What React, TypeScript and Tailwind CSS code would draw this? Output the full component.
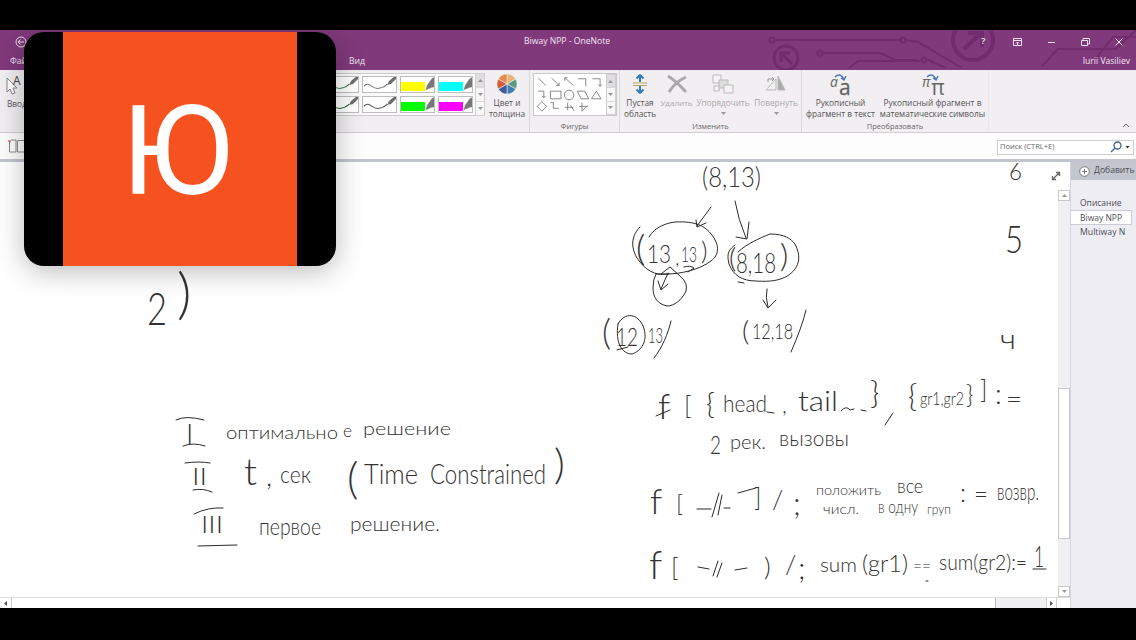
import React from "react";

type TextProps = { x: number; y: number; s: number; w?: number; children: string };

/* A handwritten note on the page: baseline at x/y, stretched to a width */
function Note({ x, y, s, w, children }: TextProps) {
  return (
    <text x={x} y={y} fontSize={s} textLength={w || undefined} lengthAdjust="spacingAndGlyphs">
      {children}
    </text>
  );
}

/* x, baseline, size, width (0 keeps the natural width), text */
const notes: [number, number, number, number, string][] = [
  [702, 187, 28, 59, "(8,13)"],
  [1009, 180, 24, 13, "6"], [1005, 253, 37, 18, "5"], [1000, 349, 27, 16, "ч"],
  [636, 261, 36, 0, "("], [647, 263, 26, 24, "13"], [675, 265, 20, 0, ","], [681, 262, 21, 16, "13"], [701, 260, 25, 0, ")"],
  [729, 268, 28, 0, "("], [736, 273, 28, 40, "8,18"], [780, 267, 32, 0, ")"],
  [602, 345, 35, 0, "("], [616, 346, 26, 22, "12"], [648, 343, 22, 15, "13"],
  [742, 341, 28, 0, "("], [752, 339, 22, 41, "12,18"],
  [658, 419, 36, 0, "f"], [684, 415, 25, 0, "["], [706, 414, 30, 0, "{"], [723, 412, 24, 44, "head"], [782, 413, 22, 0, ","],
  [798, 411, 27, 40, "tail"], [870, 404, 32, 0, "}"], [908, 407, 31, 0, "{"], [920, 405, 18, 44, "gr1,gr2"],
  [966, 404, 25, 0, "}"], [980, 399, 25, 0, "]"], [995, 404, 28, 0, ":"], [1006, 409, 27, 16, "="],
  [710, 454, 26, 11, "2"], [730, 449, 19, 36, "рек."], [779, 446, 22, 70, "вызовы"],
  [650, 514, 36, 0, "f"], [676, 512, 24, 0, "["], [754, 507, 25, 0, "]"], [772, 509, 26, 0, "/"], [793, 515, 31, 0, ";"],
  [816, 495, 14, 65, "положить"], [897, 493, 20, 26, "все"], [960, 502, 25, 0, ":"], [974, 503, 23, 14, "="], [997, 500, 24, 42, "возвр."],
  [823, 514, 14, 36, "числ."], [878, 513, 17, 40, "в одну"], [927, 514, 14, 24, "груп"],
  [649, 579, 39, 0, "f"], [671, 577, 25, 0, "["], [764, 576, 26, 0, ")"], [785, 574, 26, 0, "/"], [798, 579, 30, 0, ";"],
  [820, 572, 20, 37, "sum"], [862, 572, 23, 46, "(gr1)"], [913, 573, 20, 18, "=="],
  [939, 570, 21, 88, "sum(gr2):="], [1034, 567, 30, 10, "1"],
  [147, 325, 46, 20, "2"], [177, 313, 56, 0, ")"],
  [186, 444, 28, 0, "I"], [192, 485, 23, 15, "II"], [201, 533, 23, 22, "III"],
  [226, 439, 17, 112, "оптимально"], [343, 437, 18, 9, "е"], [363, 435, 18, 88, "решение"],
  [244, 485, 38, 0, "t"], [266, 486, 28, 0, ","], [280, 483, 23, 31, "сек"], [347, 494, 44, 0, "("],
  [364, 484, 28, 54, "Time"], [430, 484, 28, 116, "Constrained"], [554, 479, 42, 0, ")"],
  [259, 535, 23, 62, "первое"], [350, 531, 19, 90, "решение."],
];

const strokes: string[] = [
  "M711 207L697 226M696 220L697 227L706 223",
  "M735 201Q738 219 746 238M736 237L747 239L749 222",
  "M649 237C655 226 668 223 675 222C696 221 705 226 712 235C720 246 719 255 711 261C699 270 680 274 667 274C655 276 645 270 637 258C630 246 632 235 640 227",
  "M684 267Q690 265 694 268L688 272",
  "M656 274L669 274M661 274L670 267L681 277Q688 283 686 291C682 300 674 306 667 306C658 304 653 298 653 288Q653 279 656 274",
  "M668 273L661 289M658 281L661 290L668 284",
  "M738 252C748 243 758 239 770 234C785 234 791 239 795 244C801 256 799 263 795 269C786 281 770 282 756 281C742 281 733 275 729 264C726 252 730 249 735 245M738 282L744 283",
  "M767 289Q765 297 768 307M763 300L768 308L776 300",
  "M671 321C668 334 662 348 654 358",
  "M806 310Q802 327 791 352",
  "M618 324C625 311 638 314 643 326C649 341 641 351 632 354C622 354 615 343 618 324",
  "M617 350L628 347",
  "M656 416L670 410M767 412L774 413M841 411Q846 405 850 410L854 409M861 410L866 411",
  "M893 413L885 425",
  "M697 509L711 509M719 493L712 517M722 495L718 515M724 508L730 508M738 493L756 488",
  "M698 567L709 569M718 561L713 576M722 563L717 577M735 570L747 568",
  "M1033 569L1046 569M926 581L928 581",
  "M176 420Q186 415 204 420M183 446Q193 442 205 446",
  "M185 463Q199 461 210 463M193 490Q203 488 212 492",
  "M194 514Q208 507 223 508M198 546L237 545",
];

const label = "whitespace-pre text-center text-[8.3px] leading-[11px] text-[#555]";

function Pen({ color, marker }: { color: string; marker?: boolean }) {
  return (
    <svg className="h-[17px] w-[35px] border border-[#bdbdbd] bg-white" viewBox="1 1 33 15">
      {marker ? (
        <>
          <path d="M1 6H25V15H1z" fill={color} />
          <path d="M25 15L27 9L32 2L35 1V11L31 12L24 15z" fill="#777" stroke="#eee" strokeWidth=".5" />
        </>
      ) : (
        <>
          <path d="M2 10C8 4 10 15 18 12Q23 11 25 8" fill="none" stroke={color} strokeWidth="1.1" />
          <path d="M25 9L27 5L33 0L35 2L29 8z" fill="#6e6e6e" />
        </>
      )}
    </svg>
  );
}

function Arrow({ up }: { up?: boolean }) {
  return (
    <svg className="h-[3px] w-[5px]" viewBox="0 0 5 3" fill="#999">
      <path d={up ? "M0 3L2.5 0L5 3z" : "M0 0H5L2.5 3z"} />
    </svg>
  );
}

function Spin() {
  return (
    <div className="flex w-[10px] flex-col border border-[#d0d0d0] bg-[#f7f7f7]">
      <span className="flex flex-1 items-center justify-center bg-[#dedee0]"><Arrow up /></span>
      <span className="flex flex-1 items-center justify-center border-y border-[#d8d8d8]"><Arrow /></span>
      <span className="flex flex-1 items-center justify-center"><Arrow /></span>
    </div>
  );
}

function Circuit() {
  return (
    <svg className="absolute right-0 top-0 h-10 w-[396px]" viewBox="740 30 396 40" fill="none" stroke="#702c6c" strokeWidth="2">
      <circle cx="772" cy="40" r="2.5" /><path d="M775 40H900" />
      <circle cx="903" cy="40" r="2.5" /><path d="M906 40L918 42L962 68" />
      <circle cx="820" cy="53" r="2.5" /><path d="M823 53H880L896 60H917" />
      <circle cx="924" cy="60" r="2.5" /><path d="M928 60L946 68M849 68L858 61H920" />
      <circle cx="786" cy="58" r="12" strokeWidth="3" /><path d="M792 64L782 54M781 62V53H790" strokeWidth="3" />
      <circle cx="973" cy="40" r="20" strokeWidth="4" /><path d="M964 49L981 33M968 33H982V47" strokeWidth="4" />
      <path d="M1042 66L1058 49H1082L1116 49L1136 30M1097 57L1113 37H1136" />
    </svg>
  );
}

export default function App() {
  return (
    <div className="relative flex h-[640px] w-[1136px] flex-col overflow-hidden bg-black pb-[32px] pt-[30px] font-['Open_Sans','Noto_Sans',sans-serif]">
      {/* Title bar */}
      <header className="relative h-10 shrink-0 bg-[#80397b] text-[8.5px] text-[#f3e6f2]">
        <Circuit />
        <div className="relative flex h-[23px] items-center">
          <svg className="ml-[15px] h-3 w-3" viewBox="0 0 12 12" fill="none" stroke="#eddced"><circle cx="6" cy="6" r="5" /><path d="M9 6H3M5.5 3.5L3 6L5.5 8.5" /></svg>
          <span className="ml-[497px] w-[86px] whitespace-nowrap text-[8.6px]">Biway NPP - OneNote</span>
          <span className="ml-[371px] w-[10px] text-[9.5px] font-semibold">?</span>
          <svg className="ml-[21px] h-[10px] w-[112px]" viewBox="1012 36 112 10" fill="none" stroke="#f0e0ef">
            <path d="M1013.5 37.5H1021.5V44.5H1013.5zM1013 39.5H1022M1017.500 44V41M1016 42.500L1017.500 41L1019 42.500M1048 41.500H1055M1081.500 39.500H1087.500V44.500H1081.500zM1083 39V37.500H1089.500V43H1088M1115.500 37.500L1122.500 44.500M1122.500 37.500L1115.500 44.500" />
          </svg>
        </div>
        <div className="relative flex h-[17px] items-center">
          <span className="ml-[10px] w-[339px]">Файл</span><span>Вид</span>
          <span className="ml-auto mr-[6px] text-[8.6px]">Iurii Vasiliev</span>
        </div>
      </header>

      {/* Ribbon */}
      <div className="flex h-[63px] shrink-0 border-b border-[#d0ced0] bg-[#f1eff1]">
        <div className="w-[324px]">
          <svg className="h-7 w-8" viewBox="0 70 32 28"><path d="M7 78V92L10 89L12 94L15 93L13 88H17z" fill="#fff" stroke="#888" /><text x="13" y="85" fontSize="12" fill="#444">A</text></svg>
          <div className="pl-[7px] text-[8.3px] leading-[11px] text-[#555]">Ввод</div>
        </div>
        <div className="mt-[3px] grid h-[43px] grid-cols-[35px_35px_35px_35px] content-between gap-x-[3px] border-y border-[#ccc] bg-[#fafafa] py-[2px] pr-[2px]">
          <Pen color="#447a50" /><Pen color="#777" /><Pen color="#ff0" marker /><Pen color="#0ff" marker />
          <Pen color="#286a3a" /><Pen color="#555" /><Pen color="#0f0" marker /><Pen color="#f0f" marker />
        </div>
        <div className="mt-[3px] flex h-[43px]"><Spin /></div>
        <div className="flex w-[44px] flex-col items-center pt-[4px]">
          <svg className="h-5 w-5" viewBox="-10 -10 20 20" stroke="#eee" strokeWidth=".6">
            <path d="M0 0V-10A10 10 0 0 1 8.700-5z" fill="#e9b276" /><path d="M0 0L8.700-5A10 10 0 0 1 8.700 5z" fill="#5d9b7c" /><path d="M0 0L8.700 5A10 10 0 0 1 0 10z" fill="#3f7fb0" />
            <path d="M0 0V10A10 10 0 0 1-8.700 5z" fill="#405a9c" /><path d="M0 0L-8.700 5A10 10 0 0 1-8.700-5z" fill="#d9573a" /><path d="M0 0L-8.700-5A10 10 0 0 1 0-10z" fill="#e88a4e" />
          </svg>
          <div className={label + " mt-[3px]"}>{"Цвет и\nтолщина"}</div>
        </div>
        <div className="flex w-[90px] flex-col items-center border-l border-[#d9d7d9] pt-[3px]">
          <div className="flex h-[43px] w-[84px] border border-[#c8c8c8] bg-white">
            <svg className="w-[73px]" viewBox="533 73 73 43" fill="none" stroke="#777" strokeWidth=".9">
              <path d="M536 77L544 85M550 77L558 85M558 82V85H555M564 77L573 85M564 80V77H567M578 78H586V86M593 78H601V86M599 84L601 86L603 84M536 91H542V98M540 96L542 98L544 96M549 91H560V99H549zM577 91H585L589 99H581zM592 99L597 91L602 99zM540 102L545 107L540 112L535 107zM549 103H552V109H558M564 108H573M567 103V111M570 106L574 112M579 107H588M582 103V112L588 106" />
              <circle cx="568.500" cy="95" r="5" />
            </svg>
            <Spin />
          </div>
          <div className="mt-[5px] text-[7.500px] leading-[11px] text-[#666]">Фигуры</div>
        </div>
        <div className="flex w-[182px] flex-col border-l border-[#d9d7d9]">
          <div className="flex h-[51px] pt-[4px] text-[#aaa]">
            <div className="flex w-[40px] flex-col items-center">
              <svg className="h-5 w-5" viewBox="0 0 20 20" fill="none" stroke="#317cbb" strokeWidth="2"><path d="M10 8V1M6.500 4.500L10 1L13.500 4.500M10 12V19M6.500 15.500L10 19L13.500 15.500" /><path d="M3 9H17M3 11.500H17" stroke="#c3a077" strokeWidth="1" /></svg>
              <div className={label + " mt-[3px]"}>{"Пустая\nобласть"}</div>
            </div>
            <div className="flex w-[33px] flex-col items-center"><svg className="h-5 w-[22px]" viewBox="0 0 22 20" fill="none" stroke="#aaa" strokeWidth="3"><path d="M2 2Q10 7 20 18M20 3Q9 8 3 18" /></svg><span className="mt-[3px] text-[8px] leading-[11px]">Удалить</span></div>
            <div className="flex w-[60px] flex-col items-center"><svg className="h-5 w-[22px]" viewBox="0 0 22 20" fill="#ddd" stroke="#bbb"><path d="M1 1H9V9H1z" fill="#f8f2f5" /><path d="M7 6H16V14H7z" /><path d="M12 11H21V19H12zM2 12H7V17H2z" fill="#f4f2f4" /></svg><span className="mb-[4px] mt-[3px] text-[8.2px] leading-[11px]">Упорядочить</span><Arrow /></div>
            <div className="flex w-[46px] flex-col items-center"><svg className="h-5 w-[22px]" viewBox="0 0 22 20" fill="none" stroke="#bbb"><path d="M1 16L11 5V16z" /><path d="M13 16V2L20 16z" fill="#aaa" /><path d="M3 8V5H9M7 3L9 5L7 7" stroke="#999" /></svg><span className="mb-[4px] mt-[3px] text-[8.3px] leading-[11px]">Повернуть</span><Arrow /></div>
          </div>
          <div className="text-center text-[7.500px] leading-[11px] text-[#666]">Изменить</div>
        </div>
        <div className="flex w-[188px] flex-col border-x border-l-[#d9d7d9] border-r-[#e9e7e9]">
          <div className="flex h-[51px] pt-[2px]">
            <div className="flex w-[77px] flex-col items-center"><svg className="h-[25px] w-[24px] overflow-visible" viewBox="0 -2 24 25"><text x="1" y="13" fontSize="14" fontStyle="italic" fill="#666">a</text><text x="10" y="21" fontSize="21" fill="#666" stroke="#666" strokeWidth=".3">a</text><path d="M6 3Q11-2 15 5M12 4L15 6L17 2" fill="none" stroke="#4b78b9" strokeWidth="1.500" /></svg><div className={label}>{"Рукописный\nфрагмент в текст"}</div></div>
            <div className="flex w-[107px] flex-col items-center"><svg className="h-[25px] w-[24px] overflow-visible" viewBox="0 -2 24 25"><text x="1" y="13" fontSize="14" fontStyle="italic" fill="#666">π</text><text x="10" y="21" fontSize="21" fill="#666">π</text><path d="M6 3Q11-2 15 5M12 4L15 6L17 2" fill="none" stroke="#4b78b9" strokeWidth="1.500" /></svg><div className={label}>{"Рукописный фрагмент в\nматематические символы"}</div></div>
          </div>
          <div className="text-center text-[7.500px] leading-[11px] text-[#666]">Преобразовать</div>
        </div>
        <svg className="mb-[3px] ml-auto mr-[6px] h-[7px] w-[8px] self-end" viewBox="0 0 8 7" fill="none" stroke="#666"><path d="M1 5L4 2L7 5" /></svg>
      </div>

      {/* Search row */}
      <div className="flex h-[26px] shrink-0 items-center bg-[#fdfdfd]">
        <svg className="ml-2 h-4 w-5" viewBox="0 0 20 16" fill="none" stroke="#888"><path d="M1.500 3V14H8V2H3M9.500 2.500H20V14H9.500z" /><path d="M0 3H3" stroke="#c33" /></svg>
        <div className="ml-auto mr-[2px] mt-[2px] flex h-[15px] w-[137px] items-center border border-[#cfd0d6] bg-white text-[7.500px] text-[#666]">
          <span className="ml-[2px]">Поиск (CTRL+E)</span>
          <svg className="ml-auto mr-[2px] h-3 w-[21px]" viewBox="0 0 21 12" fill="none" stroke="#3f628f" strokeWidth="1.300"><circle cx="7.500" cy="4.500" r="3.500" /><path d="M5 7L1 11" /><path d="M15.500 5H19.500L17.500 7.500z" fill="#333" stroke="none" /></svg>
        </div>
      </div>
      <div className="h-[3px] shrink-0 bg-[#c2c5ce]" />

      {/* Page and section tabs */}
      <div className="flex min-h-0 flex-1">
        <main className="flex w-[1070px] flex-col bg-white">
          <div className="flex min-h-0 flex-1">
            <svg className="relative h-[435px] w-[1058px] overflow-visible font-['Lato','Noto_Sans',sans-serif] font-light" viewBox="0 162 1058 435" fill="#333">
              {notes.map(([x, y, s, w, t], i) => (
                <Note key={i} x={x} y={y} s={s} w={w}>{t}</Note>
              ))}
              <g fill="none" stroke="#2a2a2a" strokeWidth="1" strokeLinecap="round" strokeLinejoin="round">
                {strokes.map((d, i) => <path key={i} d={d} />)}
              </g>
              <path d="M1053 179L1059 173M1052.500 176V179.500H1056M1056 172.500H1059.500V176" fill="none" stroke="#666" strokeWidth="1.300" />
            </svg>
            <div className="flex w-3 flex-col bg-[#f0f0f3]">
              <div className="h-[28px] bg-white" />
              <span className="flex h-[11px] items-center justify-center border border-[#c9c9cc] bg-white"><Arrow up /></span>
              <div className="mt-[187px] h-[151px] border border-[#c9c9cc] bg-white" />
              <span className="mt-auto flex h-[11px] items-center justify-center border border-[#c9c9cc] bg-white"><Arrow /></span>
            </div>
          </div>
          <div className="flex h-[11px] border-t border-[#ddd] bg-[#f0f0f2]">
            <span className="flex w-3 items-center justify-center border-r border-[#ccc] bg-white"><svg className="h-[5px] w-[3px]" viewBox="0 0 3 5" fill="#555"><path d="M3 0V5L0 2.500z" /></svg></span>
            <div className="w-[984px] border-r border-[#bbb] bg-white" />
            <span className="ml-auto flex w-[11px] items-center justify-center border-x border-[#ccc] bg-white"><svg className="h-[5px] w-[3px]" viewBox="0 0 3 5" fill="#555"><path d="M0 0V5L3 2.500z" /></svg></span>
            <span className="w-[13px] bg-white" />
          </div>
        </main>
        <aside className="flex w-[66px] flex-col border-l border-[#d5d5df] bg-[#eeedf4] text-[8.500px] leading-[15px] text-[#4d4d55]">
          <div className="mb-[15px] flex h-[18px] shrink-0 items-center gap-1 bg-[#c3c6ce] pl-2">
            <svg className="h-[11px] w-[11px] shrink-0" viewBox="0 0 11 11" fill="#fff" stroke="#777"><circle cx="5.500" cy="5.500" r="4.800" /><path d="M3 5.500H8M5.500 3V8" /></svg>
            <span className="mb-[2px] text-[8.600px]">Добавить</span>
          </div>
          <div className="pl-[9px]">Описание</div>
          <div className="w-[61px] border-y border-r border-[#ccccd6] bg-white pl-[9px] leading-[13px]">Biway NPP</div>
          <div className="pl-[9px] text-[8.700px]">Multiway N</div>
        </aside>
      </div>

      {/* Floating speaker tile */}
      <div className="absolute left-[24px] top-[32px] flex h-[234px] w-[312px] justify-center rounded-[20px] bg-black shadow-[0_5px_28px_rgba(0,0,0,0.28)]">
        <div className="flex w-[234px] items-center justify-center bg-[#f5521f] pr-[6px] pt-[5px] font-['Roboto',sans-serif] text-[124px] leading-none text-white">Ю</div>
      </div>
    </div>
  );
}
